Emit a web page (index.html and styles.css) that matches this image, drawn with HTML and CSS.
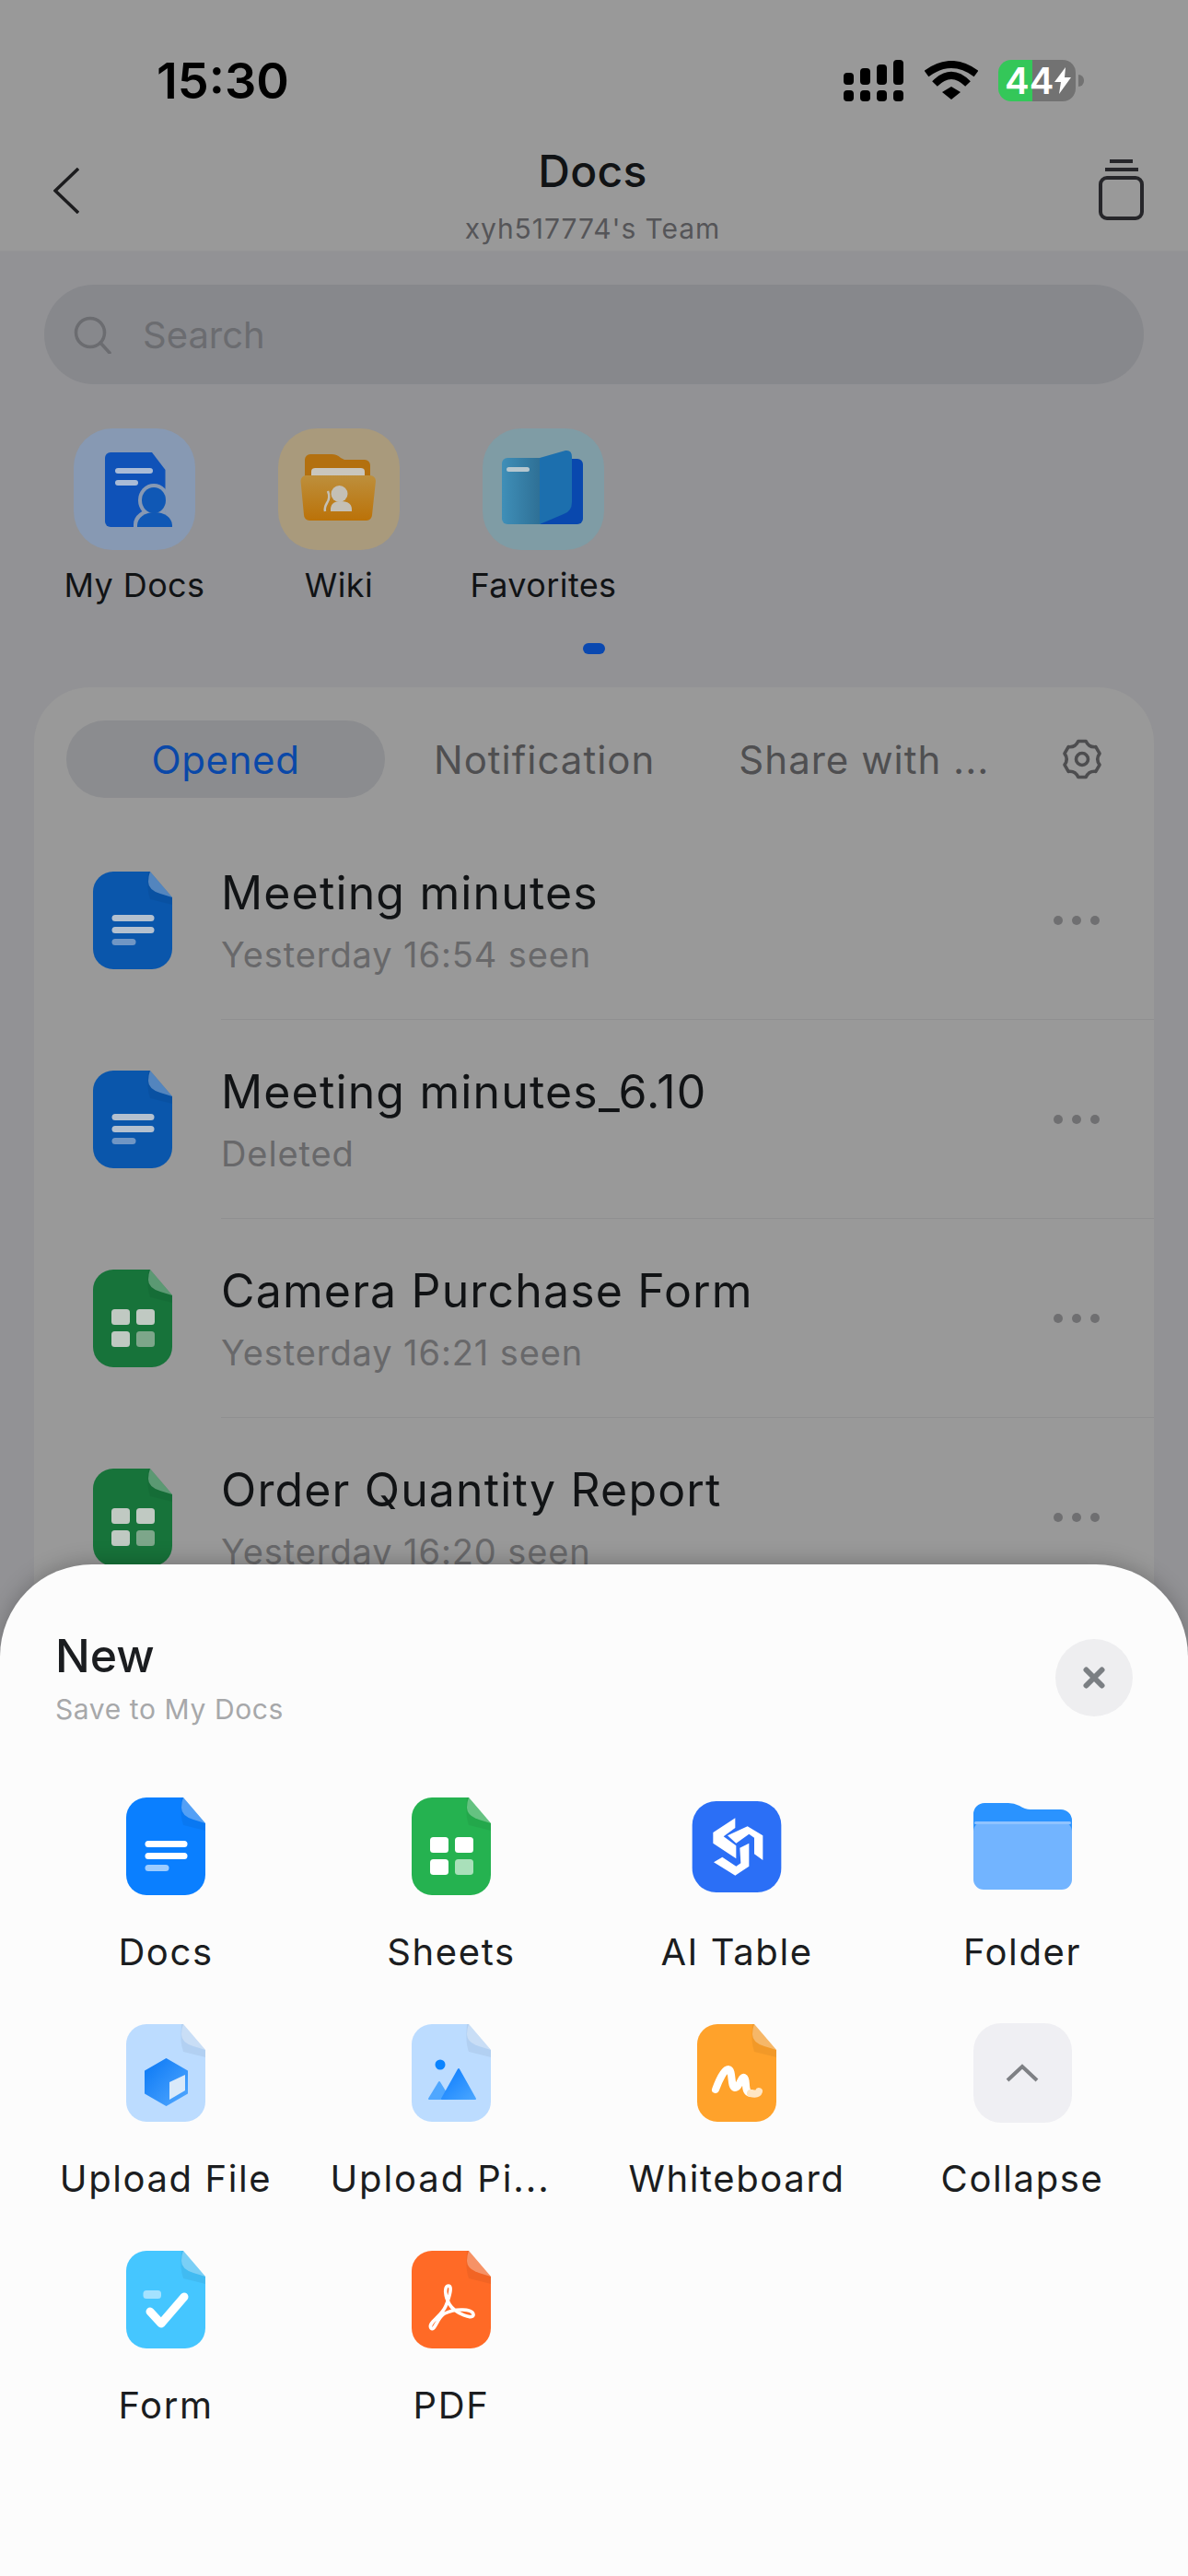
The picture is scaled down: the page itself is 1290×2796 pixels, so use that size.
FILE: index.html
```html
<!DOCTYPE html>
<html lang="en">
<head>
<meta charset="utf-8">
<title>Docs</title>
<link rel="stylesheet" href="styles.css">
</head>
<body>
<svg class="defs" width="0" height="0" aria-hidden="true">
  <defs>
    <symbol id="page" viewBox="0 0 86 106">
      <path fill="currentColor" d="M22 0H62L86 28V84A22 22 0 0 1 64 106H22A22 22 0 0 1 0 84V22A22 22 0 0 1 22 0Z"/>
      <path fill="#000" opacity=".05" d="M60 0H62L86 28V36L62 30Q58 20 60 0Z"/>
      <path fill="#fff" opacity=".3" d="M62 0L86 28L73 24Q60 20 60 11Q60 5 62 0Z"/>
    </symbol>
    <symbol id="doc-lines" viewBox="0 0 86 106">
      <rect class="line-a" x="20.5" y="47" width="46" height="7" rx="3.5"/>
      <rect class="line-a" x="20.5" y="60" width="46" height="7" rx="3.5"/>
      <rect class="line-b" x="20.5" y="73" width="26" height="7" rx="3.5"/>
    </symbol>
    <symbol id="sheet-cells" viewBox="0 0 86 106">
      <rect class="line-a" x="20" y="43" width="20" height="17" rx="3.5"/>
      <rect class="line-a" x="47" y="43" width="20" height="17" rx="3.5"/>
      <rect class="line-a" x="20" y="67" width="20" height="17" rx="3.5"/>
      <rect class="line-b" x="47" y="67" width="20" height="17" rx="3.5"/>
    </symbol>
    <linearGradient id="gHex" x1="0" y1="0" x2="1" y2="1">
      <stop offset="0" stop-color="#0a78f5"/><stop offset="1" stop-color="#52a8ff"/>
    </linearGradient>
    <linearGradient id="gPeak" x1="0" y1="0" x2="1" y2="1">
      <stop offset="0" stop-color="#0a7bff"/><stop offset="1" stop-color="#4aa6ff"/>
    </linearGradient>
    <linearGradient id="gFolder" x1="0" y1="0" x2="0" y2="1">
      <stop offset="0" stop-color="#bd8f3c"/><stop offset="1" stop-color="#bb7208"/>
    </linearGradient>
    <linearGradient id="gBook" x1="0" y1="0" x2="1" y2="0">
      <stop offset="0" stop-color="#3f8fb8"/><stop offset="1" stop-color="#2e6f95"/>
    </linearGradient>
  </defs>
</svg>

<div class="screen">
  <header class="top">
    <div class="status">
      <span class="time">15:30</span>
      <div class="status-icons">
        <svg class="signal" width="65" height="45" viewBox="0 0 65 45">
          <rect x="0" y="14" width="11" height="13" rx="4"/><rect x="18" y="9" width="11" height="18" rx="4"/><rect x="36" y="5" width="11" height="22" rx="4"/><rect x="54" y="0" width="11" height="27" rx="4"/>
          <rect x="0" y="33" width="11" height="12" rx="4"/><rect x="18" y="33" width="11" height="12" rx="4"/><rect x="36" y="33" width="11" height="12" rx="4"/><rect x="54" y="33" width="11" height="12" rx="4"/>
        </svg>
        <svg class="wifi" width="58" height="42" viewBox="0 0 58 42">
          <path d="M2 14Q29 -6 56 14" fill="none" stroke="#000" stroke-width="8"/>
          <path d="M11 25Q29 7 47 25" fill="none" stroke="#000" stroke-width="8"/>
          <path d="M19 34L29 28L39 34L29 42Z" fill="#000"/>
        </svg>
        <div class="battery-wrap">
          <div class="battery">
            <span class="battery-num">44</span>
            <svg width="20" height="29" viewBox="0 0 20 29"><path d="M13 0L1 16H8L6 29L19 11H12Z" fill="#fff"/></svg>
          </div>
          <span class="battery-tip"></span>
        </div>
      </div>
    </div>
    <nav class="nav">
      <svg class="nav-back" width="28" height="50" viewBox="0 0 28 50"><path d="M27 1L2 25L27 49" fill="none" stroke="#1c1c1e" stroke-width="3.500"/></svg>
      <div class="nav-title">
        <div class="nav-name">Docs</div>
        <div class="nav-team">xyh517774's Team</div>
      </div>
      <svg class="nav-stack" width="49" height="66" viewBox="0 0 49 66">
        <path d="M12 2H37" stroke="#26262a" stroke-width="4" fill="none"/>
        <path d="M7 11H43" stroke="#26262a" stroke-width="4" fill="none"/>
        <rect x="2" y="20" width="45" height="44" rx="7" fill="none" stroke="#26262a" stroke-width="4"/>
      </svg>
    </nav>
  </header>

  <main class="body">
    <div class="search">
      <svg width="41" height="41" viewBox="0 0 41 41"><circle cx="18" cy="18" r="15.5" fill="none" stroke="#6b6c70" stroke-width="3.500"/><path d="M29 29L39 40" stroke="#6b6c70" stroke-width="3.500" stroke-linecap="round"/></svg>
      <span class="search-text">Search</span>
    </div>

    <div class="quick">
      <div class="quick-item">
        <div class="tile tile-blue">
          <svg width="132" height="132" viewBox="0 0 132 132">
            <path d="M40 26H85L99.500 45V107H40A6 6 0 0 1 34 101V32A6 6 0 0 1 40 26Z" fill="#0f52b8"/>
            <rect x="45" y="43" width="41" height="6" rx="3" fill="#a9bbd6"/>
            <rect x="45" y="56" width="25" height="6" rx="3" fill="#a9bbd6"/>
            <path d="M65 110V104A22 17 0 0 1 109 104V110Z" fill="#8799b3"/>
            <ellipse cx="87" cy="78" rx="17" ry="18" fill="#8799b3"/>
            <ellipse cx="87" cy="78" rx="13" ry="14" fill="#1058b5"/>
            <path d="M69 107V105A19 14 0 0 1 107 105V107Z" fill="#1058b5"/>
          </svg>
        </div>
        <span class="quick-label">My Docs</span>
      </div>
      <div class="quick-item">
        <div class="tile tile-gold">
          <svg width="132" height="132" viewBox="0 0 132 132">
            <path d="M29 60V34A6 6 0 0 1 35 28H58Q64 28 68 32L72 34H94A6 6 0 0 1 100 40V60Z" fill="#b3700f"/>
            <rect x="36" y="43" width="58" height="14" rx="4" fill="#c9c6bd"/>
            <path d="M30 51H100A6 6 0 0 1 106 57L102 94A6 6 0 0 1 96 100H34A6 6 0 0 1 28 94L24.500 57A6 6 0 0 1 30 51Z" fill="url(#gFolder)"/>
            <circle cx="66.500" cy="71" r="9" fill="#c4c0b6"/>
            <path d="M57 90Q56 79 68 79Q81 79 80 90Z" fill="#c4c0b6"/>
            <path d="M54 68Q57 75 53 81Q50 86 51 90" fill="none" stroke="#c4c0b6" stroke-width="2.500"/>
          </svg>
        </div>
        <span class="quick-label">Wiki</span>
      </div>
      <div class="quick-item">
        <div class="tile tile-teal">
          <svg width="132" height="132" viewBox="0 0 132 132">
            <path d="M60 33H103A6 6 0 0 1 109 39V98A6 6 0 0 1 103 104H60Z" fill="#0948ae"/>
            <path d="M27 32H63V104H27A6 6 0 0 1 21 98V38A6 6 0 0 1 27 32Z" fill="url(#gBook)"/>
            <path d="M62 32L90 24Q97 23 97 31V80Q97 90 88 93L62 104Z" fill="#1c6fae"/>
            <rect x="26" y="42" width="25" height="5" rx="2.500" fill="#b6c7cf"/>
          </svg>
        </div>
        <span class="quick-label">Favorites</span>
      </div>
    </div>

    <div class="pager"><span class="pager-dot"></span></div>

    <section class="card">
      <div class="tabs">
        <div class="tab tab-active"><span class="tab-text-active">Opened</span></div>
        <span class="tab tab-note">Notification</span>
        <span class="tab tab-share">Share with ...</span>
        <svg class="tab-gear" width="44" height="44" viewBox="-22 -22 44 44">
          <path fill="none" stroke="#4d4d4f" stroke-width="3.600" stroke-linejoin="round" d="M-4.160-19.560L4.160-19.560Q7.250-12.560 14.860-13.380L19.020-6.180Q14.500 0 19.020 6.180L14.860 13.380Q7.250 12.560 4.160 19.560L-4.160 19.560Q-7.250 12.560-14.860 13.380L-19.020 6.180Q-14.500 0-19.020-6.180L-14.860-13.380Q-7.250-12.560-4.160-19.560Z"/>
          <circle r="6.500" fill="none" stroke="#4d4d4f" stroke-width="3.600"/>
        </svg>
      </div>

      <div class="rows">
      <div class="row">
        <svg class="row-icon row-icon-doc" width="86" height="106"><use href="#page" width="86" height="106"/><use href="#doc-lines" width="86" height="106"/></svg>
        <div class="row-main">
          <div class="row-text">
            <div class="row-title">Meeting minutes</div>
            <div class="row-sub">Yesterday 16:54 seen</div>
          </div>
          <div class="more"><i></i><i></i><i></i></div>
        </div>
      </div>
      <div class="row">
        <svg class="row-icon row-icon-doc" width="86" height="106"><use href="#page" width="86" height="106"/><use href="#doc-lines" width="86" height="106"/></svg>
        <div class="row-main">
          <div class="row-text">
            <div class="row-title">Meeting minutes_6.10</div>
            <div class="row-sub">Deleted</div>
          </div>
          <div class="more"><i></i><i></i><i></i></div>
        </div>
      </div>
      <div class="row">
        <svg class="row-icon row-icon-sheet" width="86" height="106"><use href="#page" width="86" height="106"/><use href="#sheet-cells" width="86" height="106"/></svg>
        <div class="row-main">
          <div class="row-text">
            <div class="row-title">Camera Purchase Form</div>
            <div class="row-sub">Yesterday 16:21 seen</div>
          </div>
          <div class="more"><i></i><i></i><i></i></div>
        </div>
      </div>
      <div class="row">
        <svg class="row-icon row-icon-sheet" width="86" height="106"><use href="#page" width="86" height="106"/><use href="#sheet-cells" width="86" height="106"/></svg>
        <div class="row-main">
          <div class="row-text">
            <div class="row-title">Order Quantity Report</div>
            <div class="row-sub">Yesterday 16:20 seen</div>
          </div>
          <div class="more"><i></i><i></i><i></i></div>
        </div>
      </div>
      </div>
    </section>
  </main>
</div>

<aside class="sheet">
  <div class="sheet-head">
    <div>
      <div class="sheet-title">New</div>
      <div class="sheet-sub">Save to My Docs</div>
    </div>
    <div class="close">
      <svg width="24" height="24" viewBox="0 0 24 24"><path d="M3.500 3.500L20.500 20.500M20.500 3.500L3.500 20.500" stroke="#7b7f83" stroke-width="6" stroke-linecap="round"/></svg>
    </div>
  </div>
  <div class="grid">
    <div class="item">
      <div class="item-icon"><svg class="ic-docs" width="86" height="106"><use href="#page" width="86" height="106"/><use href="#doc-lines" width="86" height="106"/></svg></div>
      <span class="item-label">Docs</span>
    </div>
    <div class="item">
      <div class="item-icon"><svg class="ic-sheets" width="86" height="106"><use href="#page" width="86" height="106"/><use href="#sheet-cells" width="86" height="106"/></svg></div>
      <span class="item-label">Sheets</span>
    </div>
    <div class="item">
      <div class="item-icon">
        <svg width="98" height="99" viewBox="20 13 290 297">
          <rect x="20" y="13" width="290" height="297" rx="78" fill="#2b6ff6"/>
          <path fill="#fff" d="M160 68V100L122 128L163 158V200L88 150V115Z"/>
          <path fill="#fff" d="M135 125L200 95L250 125V205L222 185V132L205 120L163 150Z"/>
          <path fill="#fff" d="M90 212L118 195L163 225L178 215L175 165L205 150V225L160 255Z"/>
        </svg>
      </div>
      <span class="item-label">AI Table</span>
    </div>
    <div class="item">
      <div class="item-icon">
        <svg width="107" height="94" viewBox="0 0 107 94">
          <path d="M0 50V12A12 12 0 0 1 12 0H38Q44 0 50 3Q56 7 62 7H95A12 12 0 0 1 107 19V50Z" fill="#2a93ff"/>
          <rect x="0" y="20" width="107" height="74" rx="11" fill="#72b4ff"/>
          <rect x="1" y="20" width="105" height="3" rx="1.500" fill="#8fc3ff"/>
        </svg>
      </div>
      <span class="item-label">Folder</span>
    </div>

    <div class="item">
      <div class="item-icon">
        <svg class="ic-upload" width="86" height="106" viewBox="0 0 86 106">
          <use href="#page" width="86" height="106"/>
          <path d="M43.500 38L66 51V75L43.500 88L21 75V51Z" fill="url(#gHex)" stroke="url(#gHex)" stroke-width="2" stroke-linejoin="round"/>
          <path d="M47 63L64 55V72L47 82Z" fill="#d9e9f9"/>
        </svg>
      </div>
      <span class="item-label">Upload File</span>
    </div>
    <div class="item">
      <div class="item-icon">
        <svg class="ic-upload" width="86" height="106" viewBox="0 0 86 106">
          <use href="#page" width="86" height="106"/>
          <circle cx="31" cy="44" r="5.500" fill="#0a84ff"/>
          <path d="M30 63L19 81H41Z" fill="#4fa7ff" stroke="#4fa7ff" stroke-width="2" stroke-linejoin="round"/>
          <path d="M51 49L33 81H69Z" fill="url(#gPeak)" stroke="url(#gPeak)" stroke-width="2" stroke-linejoin="round"/>
        </svg>
      </div>
      <span class="item-label item-label-cut">Upload Pi...</span>
    </div>
    <div class="item">
      <div class="item-icon">
        <svg class="ic-board" width="86" height="106" viewBox="0 0 86 106">
          <use href="#page" width="86" height="106"/>
          <path d="M20 71C24 60 30 48 34 49C39 50 36 68 41 69C46 69 48 56 51 58C55 60 50 74 58 75" fill="none" stroke="#fff" stroke-width="8" stroke-linecap="round"/>
          <path d="M58 75C62 76 66 76 67 73" fill="none" stroke="#ffe6c4" stroke-width="8" stroke-linecap="round"/>
        </svg>
      </div>
      <span class="item-label">Whiteboard</span>
    </div>
    <div class="item">
      <div class="item-icon">
        <div class="collapse-box">
          <svg width="36" height="20" viewBox="0 0 36 20"><path d="M2 18L18 3L34 18" fill="none" stroke="#7e8084" stroke-width="4"/></svg>
        </div>
      </div>
      <span class="item-label">Collapse</span>
    </div>

    <div class="item">
      <div class="item-icon">
        <svg class="ic-form" width="86" height="106" viewBox="0 0 86 106">
          <use href="#page" width="86" height="106"/>
          <rect x="18.500" y="43" width="19.500" height="9" rx="3.500" fill="#a4e2ff"/>
          <path d="M26 66L38 79L63 50" fill="none" stroke="#fff" stroke-width="9" stroke-linecap="round" stroke-linejoin="round"/>
        </svg>
      </div>
      <span class="item-label">Form</span>
    </div>
    <div class="item">
      <div class="item-icon">
        <svg class="ic-pdf" width="86" height="106" viewBox="0 0 86 106">
          <use href="#page" width="86" height="106"/>
          <path d="M21 84C17 78 32 72 37 60C42 48 44 38 40 38C35 38 36 50 41 58C47 68 68 76 67 69C66 63 48 62 36 68C28 72 25 88 21 84Z" fill="none" stroke="#fff" stroke-width="3.600" stroke-linejoin="round"/>
        </svg>
      </div>
      <span class="item-label">PDF</span>
    </div>
  </div>
</aside>
</body>
</html>
```

FILE: styles.css
```css
* { box-sizing: border-box; }

html, body {
  margin: 0;
  padding: 0;
}

body {
  position: relative;
  width: 1290px;
  height: 2796px;
  overflow: hidden;
  background: #929295;
  font-family: Inter, "Liberation Sans", Arial, sans-serif;
  color: #111315;
}

.defs { position: absolute; }

.screen {
  height: 2796px;
  display: flex;
  flex-direction: column;
}

/* ---------- top bar ---------- */
.top {
  background: #999999;
  height: 273px;
  border-bottom: 1px solid #949496;
}

.status {
  height: 130px;
  padding: 44px 113px 0 170px;
  display: flex;
  align-items: center;
  justify-content: space-between;
}

.time {
  font-size: 54px;
  font-weight: 600;
  color: #000;
}

.status-icons {
  display: flex;
  align-items: center;
}

.signal { fill: #000; display: block; }
.wifi { display: block; margin-left: 23px; }

.battery-wrap {
  display: flex;
  align-items: center;
  margin-left: 22px;
}

.battery {
  width: 84px;
  height: 45px;
  border-radius: 14px;
  padding-left: 7px;
  display: flex;
  align-items: center;
  background: linear-gradient(90deg, #34c759 0, #34c759 44%, #727272 44%, #727272 100%);
}

.battery-num {
  font-size: 40px;
  line-height: 45px;
  font-weight: 600;
  color: #fff;
}

.battery-tip {
  width: 6px;
  height: 13px;
  margin-left: 3px;
  border-radius: 0 7px 7px 0;
  background: #727272;
}

.nav {
  height: 143px;
  padding: 26px 48px 0 58px;
  display: flex;
  justify-content: space-between;
  align-items: flex-start;
}

.nav-back { margin-top: 26px; display: block; }
.nav-stack { margin-top: 17px; display: block; }

.nav-title {
  text-align: center;
  margin-left: 8px;
}

.nav-name {
  font-weight: 500;
  font-size: 48px;
  line-height: 60px;
  letter-spacing: .3px;
  color: #111315;
}

.nav-team {
  margin-top: 14px;
  font-size: 30px;
  line-height: 36px;
  letter-spacing: .95px;
  color: #555558;
}

/* ---------- body ---------- */
.body {
  flex: 1;
  display: flex;
  flex-direction: column;
}

.search {
  margin: 36px 48px 0;
  height: 108px;
  border-radius: 54px;
  background: #87888c;
  padding-left: 32px;
  display: flex;
  align-items: center;
}

.search-text {
  margin-left: 34px;
  font-size: 40px;
  color: #6b6c70;
}

.quick {
  display: flex;
  margin-top: 48px;
  padding-left: 35px;
}

.quick-item {
  width: 222px;
  display: flex;
  flex-direction: column;
  align-items: center;
}

.tile {
  width: 132px;
  height: 132px;
  border-radius: 42px;
}

.tile svg { display: block; }
.tile-blue { background: #8799b3; }
.tile-gold { background: #a99a7c; }
.tile-teal { background: #7f9ca5; }

.quick-label {
  margin-top: 16px;
  font-size: 36px;
  line-height: 44px;
  letter-spacing: .4px;
  color: #111315;
}

.pager {
  display: flex;
  justify-content: center;
  margin-top: 41px;
}

.pager-dot {
  width: 24px;
  height: 12px;
  border-radius: 6px;
  background: #0a48b0;
}

/* ---------- card ---------- */
.card {
  flex: 1;
  margin: 36px 37px 0 37px;
  padding-top: 36px;
  background: #999999;
  border-radius: 60px 60px 0 0;
}

.tabs {
  display: flex;
  align-items: center;
  height: 84px;
  padding: 0 56px 0 35px;
  font-size: 42px;
  letter-spacing: 1px;
  color: #4f4f51;
}

.tab { white-space: nowrap; }

.tab-active {
  width: 346px;
  height: 84px;
  border-radius: 42px;
  background: #8b8c8f;
  display: flex;
  align-items: center;
  justify-content: center;
}

.tab-text-active {
  color: #0a48a8;
  letter-spacing: .6px;
}

.tab-note { margin-left: 53px; }
.tab-share { margin-left: 91px; }
.tab-gear { margin-left: auto; display: block; }

.rows { margin-top: 25px; }

.row {
  display: flex;
  align-items: center;
  padding-left: 64px;
}

.row-icon { display: block; flex: none; }
.row-icon-doc { color: #0a56ab; --a: #b3c0cf; --b: #7096c4; }
.row-icon-sheet { color: #17733a; --a: #c0c9c2; --b: #7da68a; }

.line-a { fill: var(--a); }
.line-b { fill: var(--b); }

.row-main {
  flex: 1;
  height: 216px;
  margin-left: 53px;
  padding-right: 59px;
  border-bottom: 1px solid #8f8f90;
  display: flex;
  align-items: center;
  justify-content: space-between;
}

.row-title {
  font-size: 50px;
  line-height: 60px;
  letter-spacing: 1.15px;
  color: #111315;
}

.row-sub {
  margin-top: 14px;
  font-size: 38px;
  line-height: 46px;
  letter-spacing: .9px;
  color: #68686a;
}

.more {
  display: flex;
  gap: 10px;
}

.more i {
  width: 10px;
  height: 10px;
  border-radius: 50%;
  background: #6f6f71;
}

/* ---------- bottom sheet ---------- */
.sheet {
  position: absolute;
  left: 0;
  right: 0;
  top: 1698px;
  bottom: 0;
  padding: 69px 0 0;
  background: #fcfcfc;
  border-radius: 100px 100px 0 0;
  box-shadow: 0 -3px 22px rgba(0, 0, 0, .22);
}

.sheet-head {
  display: flex;
  justify-content: space-between;
  align-items: flex-start;
  padding: 0 60px;
}

.sheet-title {
  font-weight: 500;
  font-size: 50px;
  line-height: 60px;
  color: #1b1d20;
}

.sheet-sub {
  margin-top: 10px;
  font-size: 30px;
  line-height: 36px;
  letter-spacing: .6px;
  color: #a7a8aa;
}

.close {
  width: 84px;
  height: 84px;
  margin-top: 12px;
  border-radius: 50%;
  background: #eeeef0;
  display: flex;
  align-items: center;
  justify-content: center;
}

.grid {
  margin-top: 77px;
  padding-left: 25px;
  display: grid;
  grid-template-columns: repeat(4, 310px);
  row-gap: 53px;
}

.item {
  display: flex;
  flex-direction: column;
  align-items: center;
}

.item-icon {
  height: 108px;
  display: flex;
  align-items: center;
  justify-content: center;
}

.item-icon svg { display: block; }

.item-label {
  margin-top: 37px;
  font-size: 40px;
  line-height: 48px;
  letter-spacing: 1.6px;
  color: #1b1d20;
  white-space: nowrap;
}

.item-label-cut {
  margin-right: 24px;
  letter-spacing: 1.9px;
}

.ic-docs { color: #0a7fff; --a: #fff; --b: #9cccff; }
.ic-sheets { color: #25b250; --a: #fff; --b: #a9e0ba; }
.ic-upload { color: #bcdcff; }
.ic-board { color: #ffa22b; }
.ic-form { color: #45c6ff; }
.ic-pdf { color: #ff6a26; }

.collapse-box {
  width: 107px;
  height: 108px;
  border-radius: 30px;
  background: #efeff3;
  display: flex;
  align-items: center;
  justify-content: center;
}
```
